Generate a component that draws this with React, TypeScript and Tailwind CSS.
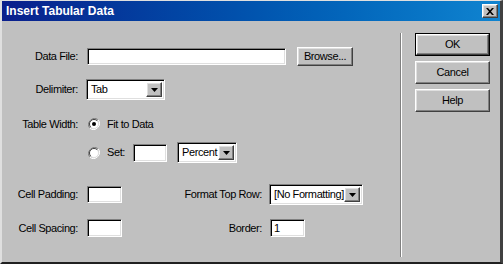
import React from 'react';

const sunken =
  'bg-white border border-t-[#808080] border-l-[#808080] border-b-white border-r-white shadow-[inset_1px_1px_0_#000,inset_-1px_-1px_0_#dfdfdf]';
const raised =
  'bg-[#c0c0c0] border border-t-white border-l-white border-b-[#404040] border-r-[#404040] shadow-[inset_-1px_-1px_0_#808080,inset_1px_1px_0_#dfdfdf]';

const Arrow = () => (
  <svg width="7" height="4" viewBox="0 0 7 4">
    <path d="M0 0h7L3.5 4z" fill="#000" />
  </svg>
);

const Field = ({ w, h, value }: { w: string; h: string; value?: string }) => (
  <div className={`${sunken} ${w} ${h} flex items-center pl-[3px] leading-none`}>{value}</div>
);

const Select = ({ w, value }: { w: string; value: string }) => (
  <div className={`${sunken} ${w} h-[21px] flex items-stretch p-[2px]`}>
    <div className="flex-1 flex items-center pl-[2px] leading-none whitespace-nowrap overflow-hidden">{value}</div>
    <div className={`${raised} w-[16px] flex items-center justify-center`}>
      <Arrow />
    </div>
  </div>
);

const Radio = ({ checked }: { checked?: boolean }) => (
  <svg width="12" height="12" viewBox="0 0 12 12">
    <path d="M10.2 1.8A6 6 0 0 0 1.8 10.2" fill="none" stroke="#808080" strokeWidth="1" />
    <path d="M1.8 10.2A6 6 0 0 0 10.2 1.8" fill="none" stroke="#fff" strokeWidth="1" />
    <circle cx="6" cy="6" r="4.5" fill="#fff" />
    <path d="M9.2 2.8A4.5 4.5 0 0 0 2.8 9.2" fill="none" stroke="#404040" strokeWidth="1" />
    <path d="M2.8 9.2A4.5 4.5 0 0 0 9.2 2.8" fill="none" stroke="#dfdfdf" strokeWidth="1" />
    {checked && <circle cx="6" cy="6" r="2" fill="#000" />}
  </svg>
);

const Label = ({ children }: { children: React.ReactNode }) => (
  <div className="w-[76px] text-right whitespace-nowrap">{children}</div>
);

export default function App() {
  return (
    <div
      className="w-[503px] h-[264px] bg-[#c0c0c0] flex flex-col border-t border-l-2 border-t-[#dfdfdf] border-l-[#dfdfdf] border-r-[3px] border-b-2 border-r-[#404040] border-b-[#202020] text-black text-[11px] tracking-[-0.4px]"
      style={{ fontFamily: '"Liberation Sans", Arial, sans-serif' }}
    >
      {/* Title bar */}
      <div className="h-[20px] bg-linear-to-r from-[#0a1e8c] to-[#1084d0] flex items-center justify-between pl-[4px] pr-[2px]">
        <span className="text-white font-bold text-[12px] tracking-normal">Insert Tabular Data</span>
        <div className={`${raised} w-[16px] h-[14px] flex items-center justify-center`}>
          <svg width="8" height="7" viewBox="0 0 8 7">
            <path d="M0 0h2l2 2.2L6 0h2L5 3.5 8 7H6L4 4.8 2 7H0l3-3.5z" fill="#000" />
          </svg>
        </div>
      </div>

      {/* Body */}
      <div className="flex-1 flex">
        <div className="w-[398px] flex flex-col pt-[26px]">
          <div className="h-[19px] flex items-center">
            <Label>Data File:</Label>
            <div className="ml-[9px]">
              <Field w="w-[199px]" h="h-[17px]" />
            </div>
            <div className={`${raised} ml-[11px] w-[56px] h-[19px] flex items-center justify-center`}>Browse...</div>
          </div>

          <div className="h-[21px] mt-[13px] flex items-center">
            <Label>Delimiter:</Label>
            <div className="ml-[8px]">
              <Select w="w-[79px]" value="Tab" />
            </div>
          </div>

          <div className="h-[14px] mt-[17px] flex items-center">
            <Label>Table Width:</Label>
            <div className="ml-[10px] flex items-center">
              <Radio checked />
            </div>
            <span className="ml-[7px]">Fit to Data</span>
          </div>

          <div className="h-[21px] mt-[11px] flex items-center">
            <div className="w-[76px]" />
            <div className="ml-[10px] flex items-center">
              <Radio />
            </div>
            <span className="ml-[7px] w-[26px]">Set:</span>
            <Field w="w-[34px]" h="h-[18px]" />
            <div className="ml-[10px]">
              <Select w="w-[60px]" value="Percent" />
            </div>
          </div>

          <div className="h-[21px] mt-[21px] flex items-center">
            <Label>Cell Padding:</Label>
            <div className="ml-[9px]">
              <Field w="w-[35px]" h="h-[17px]" />
            </div>
            <div className="w-[140px] text-right whitespace-nowrap">Format Top Row:</div>
            <div className="ml-[7px]">
              <Select w="w-[94px]" value="[No Formatting]" />
            </div>
          </div>

          <div className="h-[18px] mt-[14px] flex items-center">
            <Label>Cell Spacing:</Label>
            <div className="ml-[9px]">
              <Field w="w-[35px]" h="h-[18px]" />
            </div>
            <div className="w-[140px] text-right whitespace-nowrap">Border:</div>
            <div className="ml-[8px]">
              <Field w="w-[35px]" h="h-[18px]" value="1" />
            </div>
          </div>
        </div>

        {/* Separator */}
        <div className="mt-[12px] mb-[5px] w-0 border-l border-r border-l-[#808080] border-r-white" />

        {/* Buttons */}
        <div className="ml-[13px] pt-[12px] flex flex-col gap-[5px] w-[75px]">
          <div className="h-[23px] border border-black">
            <div className={`${raised} h-full flex items-center justify-center`}>OK</div>
          </div>
          <div className={`${raised} h-[23px] flex items-center justify-center`}>Cancel</div>
          <div className={`${raised} h-[23px] flex items-center justify-center`}>Help</div>
        </div>
      </div>
    </div>
  );
}
